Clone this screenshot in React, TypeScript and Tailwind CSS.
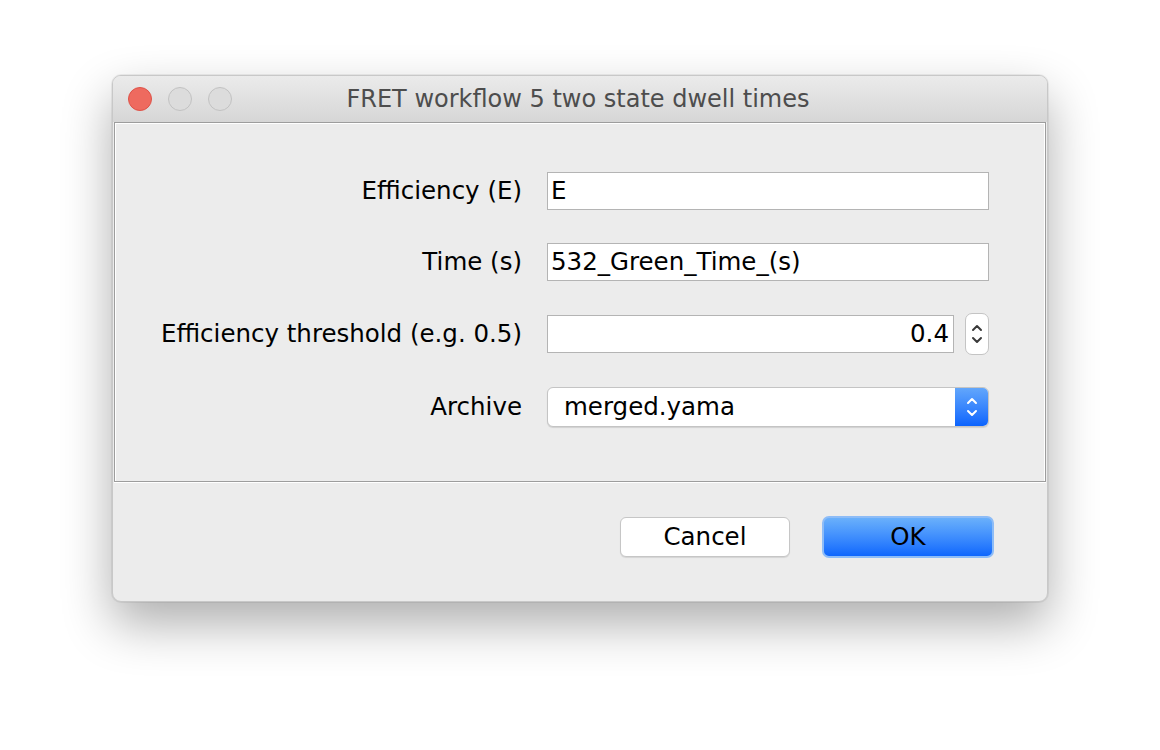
import React from "react"

const font = { fontFamily: '"DejaVu Sans", "Liberation Sans", sans-serif' }

function TextRow({ label, value, className }: { label: string; value: string; className?: string }) {
  return (
    <div className={"flex items-center " + (className ?? "")}>
      <div className="w-[407px] text-right text-[24.5px] leading-none text-black">{label}</div>
      <div className="ml-[25px] flex h-[38px] w-[442px] items-center border border-[#b4b4b4] bg-white px-[3px] text-[24.5px] leading-none text-black">
        <span>{value}</span>
      </div>
    </div>
  )
}

function Chevrons({ color }: { color: string }) {
  return (
    <svg width="14" height="28" viewBox="0 0 14 28">
      <path d="M3 10 L7 6 L11 10" fill="none" stroke={color} strokeWidth="2" strokeLinecap="round" strokeLinejoin="round" />
      <path d="M3 18 L7 22 L11 18" fill="none" stroke={color} strokeWidth="2" strokeLinecap="round" strokeLinejoin="round" />
    </svg>
  )
}

export default function App() {
  return (
    <div className="h-[750px] w-[1160px] bg-white pl-[112px] pt-[75px]" style={font}>
      <div className="flex h-[527px] w-[936px] flex-col overflow-hidden rounded-[9px] border border-[#c8c8c8] bg-[#ececec] shadow-[0_22px_50px_rgba(0,0,0,0.32),0_0_0_1px_rgba(0,0,0,0.06)]">
        {/* title bar */}
        <div className="relative flex h-[46px] items-center bg-gradient-to-b from-[#ebebeb] to-[#d6d6d6] pl-[15px]">
          <div className="flex gap-[16px]">
            <span className="h-[24px] w-[24px] rounded-full border border-[#de5248] bg-[#ee6a5f]" />
            <span className="h-[24px] w-[24px] rounded-full border border-[#c2c2c2] bg-[#dcdcdc]" />
            <span className="h-[24px] w-[24px] rounded-full border border-[#c2c2c2] bg-[#dcdcdc]" />
          </div>
          <div className="absolute inset-0 flex items-center justify-center pr-[4px] text-[24px] text-[#4d4d4d]">
            FRET workflow 5 two state dwell times
          </div>
        </div>

        {/* content panel */}
        <div className="mx-[1px] h-[360px] border border-[#9d9d9d] shadow-[inset_1px_1px_0_#ffffff,inset_-1px_0_0_#ffffff]">
          <div className="flex flex-col pt-[49px]">
            <TextRow label="Efficiency (E)" value="E" />
            <TextRow label="Time (s)" value="532_Green_Time_(s)" className="mt-[33px]" />
            <div className="mt-[32px] flex items-center">
              <div className="w-[407px] text-right text-[24.5px] leading-none text-black">Efficiency threshold (e.g. 0.5)</div>
              <div className="ml-[25px] flex h-[38px] w-[407px] items-center border border-[#b4b4b4] bg-white px-[4px] text-[24.5px] leading-none text-black">
                <span className="ml-auto">0.4</span>
              </div>
              <div className="ml-[11px] flex h-[42px] w-[24px] items-center justify-center rounded-[7px] border border-[#c4c4c4] bg-white">
                <Chevrons color="#3a3a3a" />
              </div>
            </div>
            <div className="mt-[32px] flex items-center">
              <div className="w-[407px] text-right text-[24.5px] leading-none text-black">Archive</div>
              <div className="ml-[25px] flex h-[40px] w-[442px] overflow-hidden rounded-[6px] border border-[#c4c4c4] bg-white shadow-[0_1px_1px_rgba(0,0,0,0.12)]">
                <div className="flex flex-1 items-center pl-[16px] text-[24.5px] leading-none text-black">merged.yama</div>
                <div className="flex w-[33px] items-center justify-center bg-gradient-to-b from-[#62a6fb] to-[#0a63fd]">
                  <Chevrons color="#ffffff" />
                </div>
              </div>
            </div>
          </div>
        </div>
        <div className="mx-[1px] h-[1px] bg-white" />

        {/* footer */}
        <div className="flex flex-1 items-start justify-end gap-[32px] pr-[53px] pt-[33px]">
          <button className="mt-[1px] h-[40px] w-[170px] rounded-[6px] border border-[#c6c6c6] bg-white text-[24.5px] leading-none text-black shadow-[0_1px_1px_rgba(0,0,0,0.1)]">
            Cancel
          </button>
          <button className="h-[42px] w-[172px] rounded-[7px] border-[2px] border-[#8dbcf7] bg-gradient-to-b from-[#6ab0fb] to-[#0d66fd] text-[24.5px] leading-none text-black">
            OK
          </button>
        </div>
      </div>
    </div>
  )
}
